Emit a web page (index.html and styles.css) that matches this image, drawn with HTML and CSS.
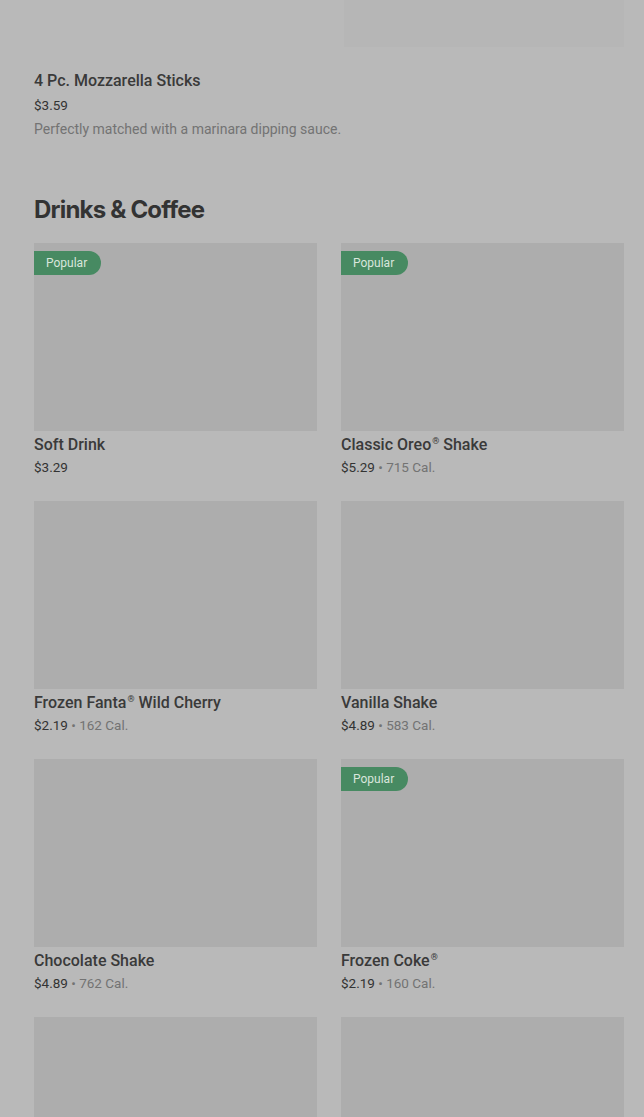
FILE: index.html
```html
<!DOCTYPE html>
<html lang="en">
<head>
    <meta charset="UTF-8">
    <meta name="viewport" content="width=device-width, initial-scale=1.0">
    <title>Menu</title>
    <link rel="stylesheet" href="styles.css">
</head>
<body>
    <main class="menu">
        <div class="prev-row">
            <div class="prev-thumb"></div>
        </div>

        <div class="item-plain">
            <h3 class="item-name">4 Pc. Mozzarella Sticks</h3>
            <p class="item-price">$3.59</p>
            <p class="item-desc">Perfectly matched with a marinara dipping sauce.</p>
        </div>

        <section class="category">
            <h2 class="category-title">Drinks &amp; Coffee</h2>
            <div class="grid">
                <div class="card">
                    <div class="thumb"><span class="badge">Popular</span></div>
                    <h3 class="item-name">Soft Drink</h3>
                    <p class="item-price">$3.29</p>
                </div>
                <div class="card">
                    <div class="thumb"><span class="badge">Popular</span></div>
                    <h3 class="item-name">Classic Oreo<sup class="reg">®</sup> Shake</h3>
                    <p class="item-price">$5.29 <span class="cal">• 715 Cal.</span></p>
                </div>
                <div class="card">
                    <div class="thumb"></div>
                    <h3 class="item-name">Frozen Fanta<sup class="reg">®</sup> Wild Cherry</h3>
                    <p class="item-price">$2.19 <span class="cal">• 162 Cal.</span></p>
                </div>
                <div class="card">
                    <div class="thumb"></div>
                    <h3 class="item-name">Vanilla Shake</h3>
                    <p class="item-price">$4.89 <span class="cal">• 583 Cal.</span></p>
                </div>
                <div class="card">
                    <div class="thumb"></div>
                    <h3 class="item-name">Chocolate Shake</h3>
                    <p class="item-price">$4.89 <span class="cal">• 762 Cal.</span></p>
                </div>
                <div class="card">
                    <div class="thumb"><span class="badge">Popular</span></div>
                    <h3 class="item-name">Frozen Coke<sup class="reg">®</sup></h3>
                    <p class="item-price">$2.19 <span class="cal">• 160 Cal.</span></p>
                </div>
                <div class="card">
                    <div class="thumb"></div>
                </div>
                <div class="card">
                    <div class="thumb"></div>
                </div>
            </div>
        </section>
    </main>
</body>
</html>
```

FILE: styles.css
```css
body {
    font-family: Roboto, "Liberation Sans", sans-serif;
    background-color: #b9b9b9;
    color: #383838;
    margin: 0;
    padding: 0;
    height: 1117px;
    overflow: hidden;
}

.menu {
    padding: 0 20px 0 34px;
}

.prev-row {
    display: flex;
    justify-content: flex-end;
}

.prev-thumb {
    width: 280px;
    height: 47px;
    background-color: #b6b6b6;
}

.item-plain {
    margin-top: 24px;
}

.item-name {
    font-size: 16px;
    font-weight: 500;
    line-height: 20px;
    margin: 0;
    color: #3a3a3a;
}

.reg {
    font-size: 9px;
    line-height: 0;
    vertical-align: 6px;
    margin-left: 1px;
}

.item-price {
    font-size: 13.5px;
    line-height: 20px;
    margin: 4px 0 0;
    color: #333333;
}

.cal {
    color: #737373;
}

.item-desc {
    font-size: 14px;
    line-height: 20px;
    margin: 4px 0 0;
    color: #737373;
}

.category {
    margin-top: 55px;
}

.category-title {
    font-family: Inter, "Liberation Sans", sans-serif;
    font-size: 24px;
    font-weight: 700;
    line-height: 32px;
    letter-spacing: -0.8px;
    margin: 0 0 17px;
    color: #333333;
}

.grid {
    display: grid;
    grid-template-columns: 283px 283px;
    column-gap: 24px;
    row-gap: 24px;
}

.card .item-name {
    margin-top: 4px;
}

.card .item-price {
    margin-top: 2px;
}

.thumb {
    height: 188px;
    background-color: #adadad;
    position: relative;
}

.badge {
    position: absolute;
    top: 8px;
    left: 0;
    height: 24px;
    line-height: 24px;
    padding: 0 14px 0 12px;
    font-size: 12px;
    color: #d9e6dd;
    background-color: #478a62;
    border-radius: 0 12px 12px 0;
}
```
